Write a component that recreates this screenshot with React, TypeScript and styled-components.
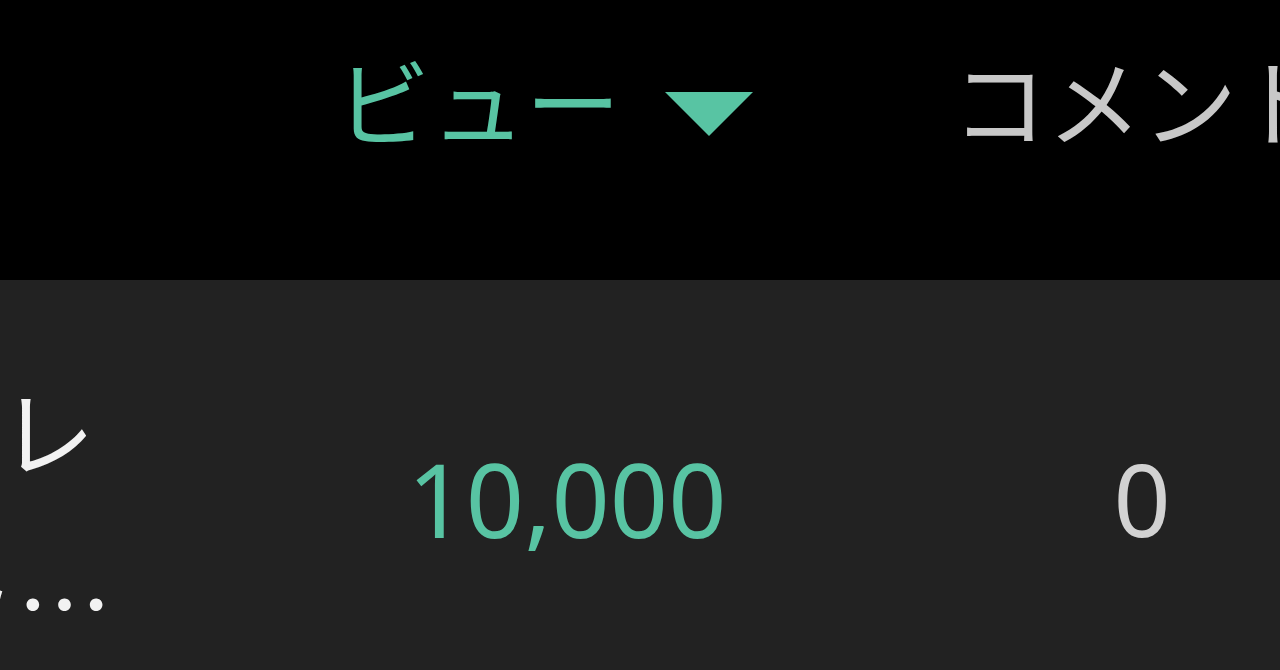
import React from 'react';
import styled, { createGlobalStyle } from 'styled-components';

const TEAL = '#58c4a3';

const GlobalStyle = createGlobalStyle`
  html, body {
    margin: 0;
    padding: 0;
    background: #000;
    overflow: hidden;
  }
  body {
    font-family: "Noto Sans", "Noto Sans CJK JP", sans-serif;
  }
`;

const App: React.FC = () => {
  return (
    <>
      <GlobalStyle />
      <Table>
        <HeaderRow>
          <TitleCol />
          <ViewsHeader>
            ビュー
            <SortIcon viewBox="0 0 88 44">
              <path d="M0 0 H88 L44 44 Z" fill={TEAL} />
            </SortIcon>
          </ViewsHeader>
          <CommentsCol>
            <HeaderLabel>コメント</HeaderLabel>
          </CommentsCol>
        </HeaderRow>
        <DataRow>
          <TitleCol>
            <TitleLine $trim={17}>ゲーム実況プレ</TitleLine>
            <TitleLine $trim={0}>イ動画のショッ…</TitleLine>
          </TitleCol>
          <ViewsValue>10,000</ViewsValue>
          <CommentsCol>
            <CountValue>0</CountValue>
          </CommentsCol>
        </DataRow>
      </Table>
    </>
  );
};

export default App;

const Table = styled.div`
  width: 1280px;
  height: 670px;
  overflow: hidden;
  display: flex;
  flex-direction: column;
`;

const HeaderRow = styled.div`
  display: flex;
  align-items: flex-start;
  height: 280px;
  padding-top: 56px;
  box-sizing: border-box;
  background: #000;
  font-size: 95px;
  line-height: 1;
  flex-shrink: 0;
`;

const DataRow = styled.div`
  display: flex;
  align-items: center;
  height: 436px;
  background: #222222;
  flex-shrink: 0;
`;

const TitleCol = styled.div`
  width: 112px;
  flex-shrink: 0;
  overflow: hidden;
  display: flex;
  flex-direction: column;
  padding-top: 32px;
`;

const TitleLine = styled.div<{ $trim: number }>`
  display: flex;
  justify-content: flex-end;
  white-space: nowrap;
  padding-right: ${({ $trim }) => $trim}px;
  font-family: "Noto Sans CJK JP", sans-serif;
  font-size: 95px;
  line-height: 171px;
  color: #f2f2f2;
`;

const ViewsHeader = styled.div`
  width: 880px;
  flex-shrink: 0;
  display: flex;
  justify-content: center;
  align-items: center;
  padding-right: 16px;
  box-sizing: border-box;
  color: ${TEAL};
`;

const SortIcon = styled.svg`
  width: 88px;
  height: 44px;
  margin-left: 44px;
  margin-top: 20px;
`;

const ViewsValue = styled.div`
  width: 880px;
  flex-shrink: 0;
  display: flex;
  justify-content: center;
  padding-left: 30px;
  box-sizing: border-box;
  font-size: 102px;
  color: ${TEAL};
`;

const CommentsCol = styled.div`
  width: 300px;
  flex-shrink: 0;
  display: flex;
  justify-content: center;
`;

const HeaderLabel = styled.span`
  white-space: nowrap;
  color: #c8c8c8;
`;

const CountValue = styled.span`
  font-size: 100px;
  color: #d2d2d2;
`;
